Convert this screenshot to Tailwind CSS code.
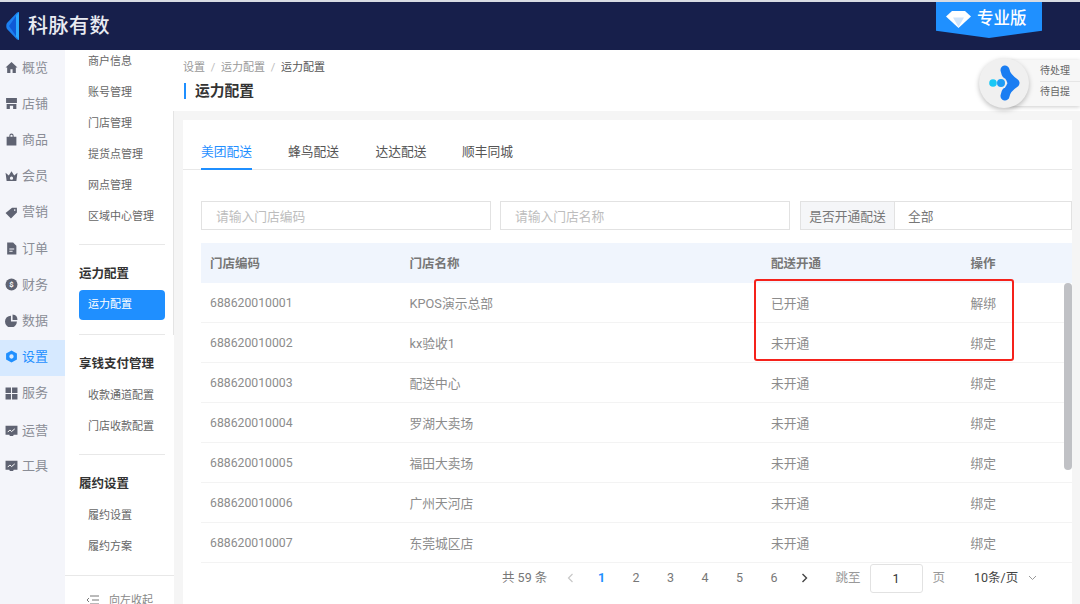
<!DOCTYPE html>
<html lang="zh-CN">
<head>
<meta charset="UTF-8">
<title>运力配置</title>
<script src="https://cdn.jsdelivr.net/npm/@tailwindcss/browser@4"></script>
</head>
<body class="w-[1080px] h-[604px] overflow-hidden bg-white font-['Roboto','Noto_Sans_CJK_SC',sans-serif] text-[12.750px] text-[#8c8c8c]">
<div class="relative flex flex-col h-[604px] overflow-hidden">
  <!-- header -->
  <header class="h-[50px] shrink-0 border-t-2 border-[#d8dbe3] bg-[#171f4b] flex items-start justify-between pl-[6px] pr-[38px] z-10">
    <div class="flex items-center gap-[9px] h-[48px]">
      <svg width="13" height="28" viewBox="0 0 13 28"><path d="M13 0V28L11 27.500 1 17C0 15.500 0 12.500 1 11L11 .5Z" fill="#1c7ff0"/><path d="M10 4V24L3 14Z" fill="#0f5ad6"/><path d="M13 0V28L10 24.500V3.500Z" fill="#2aa8ff"/></svg>
      <span class="text-[20px] leading-none font-medium tracking-[0.5px] text-[#e9ebf2]">科脉有数</span>
    </div>
    <div class="w-[106px] h-[36px] bg-[#1f90ff] [clip-path:polygon(0_0,100%_0,100%_80%,50%_100%,0_80%)] flex items-start gap-[6px] pl-[10px] pt-[5px] text-white">
      <svg class="mt-[3px]" width="25" height="18" viewBox="0 0 25 18"><path d="M6 1H19L25 6.500 12.500 18 0 6.500Z" fill="#fff"/><path d="M7 7.500H18L12.500 17Z" fill="#cfe4fb"/></svg>
      <span class="text-[16.500px] leading-[24px] font-medium">专业版</span>
    </div>
  </header>

  <div class="flex flex-1 min-h-0">
    <!-- icon rail -->
    <nav class="w-[65px] shrink-0 bg-[#f4f5fa] text-[13px] text-[#8a8d96]">
      <a class="flex items-center gap-[4px] h-[36.200px] pb-[1.500px] pl-[5px]"><svg width="13" height="13" viewBox="0 0 24 24" fill="#5f6372"><path d="M12 2 1 12h3v10h6v-7h4v7h6V12h3Z"/></svg>概览</a>
      <a class="flex items-center gap-[4px] h-[36.200px] pb-[1.500px] pl-[5px]"><svg width="13" height="13" viewBox="0 0 24 24" fill="#5f6372"><path d="M2 2h20v9H2ZM3 13h18v9h-6v-6H9v6H3Z"/></svg>店铺</a>
      <a class="flex items-center gap-[4px] h-[36.200px] pb-[1.500px] pl-[5px]"><svg width="13" height="13" viewBox="0 0 24 24" fill="#5f6372"><path d="M8 7V5a4 4 0 0 1 8 0v2h5v16H3V7Zm2 0h4V5a2 2 0 0 0-4 0Z"/></svg>商品</a>
      <a class="flex items-center gap-[4px] h-[36.200px] pb-[1.500px] pl-[5px]"><svg width="13" height="13" viewBox="0 0 24 24" fill="#5f6372"><path fill-rule="evenodd" d="M1 7l6 5 5-8 5 8 6-5-2 15H3Zm11 7a3 3 0 1 0 0 6 3 3 0 0 0 0-6Z"/></svg>会员</a>
      <a class="flex items-center gap-[4px] h-[36.200px] pb-[1.500px] pl-[5px]"><svg width="13" height="13" viewBox="0 0 24 24" fill="#5f6372"><path fill-rule="evenodd" d="M13 3h9v9L11 23 1 13Zm5 3a1.500 1.500 0 1 0 0 3 1.500 1.500 0 0 0 0-3Z"/></svg>营销</a>
      <a class="flex items-center gap-[4px] h-[36.200px] pb-[1.500px] pl-[5px]"><svg width="13" height="13" viewBox="0 0 24 24" fill="#5f6372"><path fill-rule="evenodd" d="M4 1h11l6 6v16H4Zm4 11v2h9v-2Zm0 4v2h6v-2Z"/></svg>订单</a>
      <a class="flex items-center gap-[4px] h-[36.200px] pb-[1.500px] pl-[5px]"><svg width="13" height="13" viewBox="0 0 24 24"><circle cx="12" cy="12" r="11" fill="#5f6372"/><text x="12" y="17" text-anchor="middle" font-size="14" font-weight="700" fill="#fff">$</text></svg>财务</a>
      <a class="flex items-center gap-[4px] h-[36.200px] pb-[1.500px] pl-[5px]"><svg width="13" height="13" viewBox="0 0 24 24" fill="#5f6372"><path d="M11 3v11h11A11 11 0 1 1 11 3Z"/><path d="M14 1a10 10 0 0 1 9 10h-9Z"/></svg>数据</a>
      <a class="flex items-center gap-[4px] h-[36.200px] pb-[1.500px] pl-[5px] bg-[#d6e9ff] text-[#1f8fff]"><svg width="13" height="13" viewBox="0 0 24 24" fill="#1f8fff"><path fill-rule="evenodd" d="M12 1l10 5.500v11L12 23 2 17.500v-11Zm0 7a4 4 0 1 0 0 8 4 4 0 0 0 0-8Z"/></svg>设置</a>
      <a class="flex items-center gap-[4px] h-[36.200px] pb-[1.500px] pl-[5px]"><svg width="13" height="13" viewBox="0 0 24 24" fill="#5f6372"><path d="M1 1h10v10H1ZM13 1h10v10H13ZM1 13h10v10H1ZM13 13h10v10H13Z"/></svg>服务</a>
      <a class="flex items-center gap-[4px] h-[36.200px] pt-[1px] pl-[5px]"><svg width="13" height="13" viewBox="0 0 24 24"><path d="M1 3h22v17h-7l-1 2H9l-1-2H1Z" fill="#5f6372"/><path d="M5 15l4-4 3 3 6-5" stroke="#fff" stroke-width="1.800" fill="none"/></svg>运营</a>
      <a class="flex items-center gap-[4px] h-[36.200px] pb-[1.500px] pl-[5px]"><svg width="13" height="13" viewBox="0 0 24 24"><path d="M1 3h22v17h-7l-1 2H9l-1-2H1Z" fill="#5f6372"/><path d="M5 15l4-4 3 3 6-5" stroke="#fff" stroke-width="1.800" fill="none"/></svg>工具</a>
    </nav>

    <!-- sub menu -->
    <aside class="relative w-[109px] shrink-0 flex flex-col text-[11px] text-[#666]">
      <div class="flex-1 min-h-0 overflow-hidden pl-[14px] pr-[9px]">
        <div class="-mt-[4.500px]">
          <a class="block pl-[9px] leading-[31px]">商户信息</a>
          <a class="block pl-[9px] leading-[31px]">账号管理</a>
          <a class="block pl-[9px] leading-[31px]">门店管理</a>
          <a class="block pl-[9px] leading-[31px]">提货点管理</a>
          <a class="block pl-[9px] leading-[31px]">网点管理</a>
          <a class="block pl-[9px] leading-[31px]">区域中心管理</a>
          <div class="mt-[12px] border-t border-[#e8e8e8]"></div>
          <h3 class="mt-[19px] mb-[6.500px] text-[12.500px] leading-[20px] font-bold text-[#333]">运力配置</h3>
          <a class="block pl-[9px] h-[30px] leading-[30px] rounded-[4px] bg-[#1f8fff] text-white">运力配置</a>
          <div class="mt-[14px] border-t border-[#e8e8e8]"></div>
          <h3 class="mt-[19px] mb-[6px] text-[12.500px] leading-[20px] font-bold text-[#333]">享钱支付管理</h3>
          <a class="block pl-[9px] leading-[31px]">收款通道配置</a>
          <a class="block pl-[9px] leading-[31px]">门店收款配置</a>
          <div class="mt-[12px] border-t border-[#e8e8e8]"></div>
          <h3 class="mt-[19px] mb-[6px] text-[12.500px] leading-[20px] font-bold text-[#333]">履约设置</h3>
          <a class="block pl-[9px] leading-[31px]">履约设置</a>
          <a class="block pl-[9px] leading-[31px]">履约方案</a>
        </div>
      </div>
      <div class="h-[29px] shrink-0 border-t border-[#e8e8e8] flex items-start gap-[10px] pl-[21px] pt-[17px] text-[#888]">
        <svg class="mt-[2px]" width="13" height="10" viewBox="0 0 13 10" fill="none" stroke="#777"><path d="M4 1h9M6 5h7M4 9h9M3 3 1 5l2 2"/></svg>
        <span class="leading-[16px]">向左收起</span>
      </div>
      <div class="absolute right-0 top-[61px] w-px h-[224px] bg-[#e4e4e4]"></div>
    </aside>

    <!-- main -->
    <main class="relative flex-1 min-w-0 flex flex-col bg-[#f5f5f5]">
      <div class="h-[61px] shrink-0 bg-white px-[9px] pt-[11px]">
        <div class="flex items-center h-[14px] text-[11px] text-[#999] gap-[5.750px]">
          <span>设置</span><span class="text-[#bbb]">/</span><span>运力配置</span><span class="text-[#bbb]">/</span><span class="text-[#555]">运力配置</span>
        </div>
        <div class="mt-[8px] ml-[1px] pl-[9px] h-[16px] border-l-2 border-[#1f8fff] flex items-center text-[14.750px] font-bold text-[#333]">运力配置</div>
      </div>
      <div class="flex-1 min-h-0 mt-[9px] ml-[9px] mr-[8px] pb-[11px] bg-white flex flex-col">
        <div class="flex h-[50px] shrink-0 pl-[18px] gap-[35.500px] border-b border-[#e8e8e8] text-[12.750px] text-[#555]">
          <a class="h-[50px] mr-[0.500px] pt-[21.500px] leading-[20px] border-b-2 border-[#1f8fff] text-[#1f8fff]">美团配送</a>
          <a class="pt-[21.500px] mr-[1px] leading-[20px]">蜂鸟配送</a>
          <a class="pt-[21.500px] leading-[20px]">达达配送</a>
          <a class="pt-[21.500px] leading-[20px]">顺丰同城</a>
        </div>
        <div class="flex pl-[18px] mt-[31px] h-[29px] shrink-0">
          <div class="w-[290px] border border-[#e2e2e2] pl-[14px] leading-[29px] text-[#bdbdbd]">请输入门店编码</div>
          <div class="w-[290px] ml-[9px] border border-[#e2e2e2] pl-[14px] leading-[29px] text-[#bdbdbd]">请输入门店名称</div>
          <div class="flex-1 ml-[10px] flex border border-[#e2e2e2]">
            <span class="w-[94px] bg-[#f5f6f8] border-r border-[#e2e2e2] text-center leading-[29px] text-[#777]">是否开通配送</span>
            <span class="pl-[13px] leading-[29px] text-[#777]">全部</span>
          </div>
        </div>
        <div class="relative ml-[18px] mt-[13px] flex-1 min-h-0 overflow-hidden">
          <div class="grid grid-cols-[199.500px_361.500px_199.500px_110.500px] h-[40px] bg-[#f0f5fd] items-center pl-[9px] pt-[3px] text-[12.500px] font-bold text-[#777]">
            <span>门店编码</span><span>门店名称</span><span>配送开通</span><span>操作</span>
          </div>
          <div id="rows"></div>
          <div class="absolute right-0 top-[40px] w-[8px] h-[187px] rounded-[4px] bg-[#c0c1c5]"></div>
        </div>
        <div class="h-[30px] shrink-0 flex items-center text-[12.500px] text-[#777]">
          <span class="ml-[319px] w-[40px] whitespace-nowrap">共 59 条</span>
          <svg class="ml-[25px]" width="7" height="10" viewBox="0 0 7 10" fill="none" stroke="#c8c8c8" stroke-width="1.200"><path d="M5.500 1 1.500 5l4 4"/></svg>
          <span class="ml-[24px] w-[8px] font-bold text-[#1f8fff]">1</span>
          <span class="ml-[26.500px] w-[8px]">2</span>
          <span class="ml-[26.500px] w-[8px]">3</span>
          <span class="ml-[26.500px] w-[8px]">4</span>
          <span class="ml-[26.500px] w-[8px]">5</span>
          <span class="ml-[26.500px] w-[8px]">6</span>
          <svg class="ml-[22px]" width="7" height="10" viewBox="0 0 7 10" fill="none" stroke="#444" stroke-width="1.400"><path d="M1.500 1l4 4-4 4"/></svg>
          <span class="ml-[28px] text-[#999]">跳至</span>
          <span class="ml-[9px] w-[53px] h-[29px] rounded-[3px] border border-[#e2e2e2] text-center leading-[27px] text-[#333]">1</span>
          <span class="ml-[10px] text-[#999]">页</span>
          <span class="ml-[29px] text-[#444]">10条/页</span>
          <svg class="ml-[10px]" width="9" height="6" viewBox="0 0 9 6" fill="none" stroke="#999"><path d="M1 1l3.500 3.500L8 1"/></svg>
        </div>
      </div>

      <!-- floating shortcut -->
      <div class="absolute right-0 top-[10px] w-[76px] h-[46px] rounded-l-[8px] bg-[#f7f7f7] shadow-[0_1px_4px_rgba(0,0,0,0.2)] pl-[36px] flex flex-col text-[10px] text-[#666]">
        <span class="h-[22px] leading-[22px] border-b border-[#e6e6e6]">待处理</span>
        <span class="h-[22px] leading-[20px]">待自提</span>
      </div>
      <div class="absolute left-[805px] top-[8px] w-[50px] h-[50px] rounded-full bg-[#f0f0f0] shadow-[0_2px_5px_rgba(0,0,0,0.25)]">
        <svg width="50" height="50" viewBox="0 0 50 50"><path d="M26 12Q27 19 36 25Q27 31 26 38" fill="none" stroke="#1a7df2" stroke-width="9" stroke-linecap="round" stroke-linejoin="round"/><circle cx="22" cy="25" r="6" fill="#f0f0f0"/><circle cx="14" cy="25" r="3.800" fill="#19c8f5"/><circle cx="22" cy="25" r="4" fill="#1e9cf5"/></svg>
      </div>

      <!-- red annotation -->
      <div class="absolute left-[580px] top-[229px] w-[260px] h-[82px] rounded-[3px] border-2 border-[#f5221b]"></div>
    </main>
  </div>
</div>
<script>
  const stores = [
    ["688620010001", "KPOS演示总部", "已开通", "解绑"],
    ["688620010002", "kx验收1", "未开通", "绑定"],
    ["688620010003", "配送中心", "未开通", "绑定"],
    ["688620010004", "罗湖大卖场", "未开通", "绑定"],
    ["688620010005", "福田大卖场", "未开通", "绑定"],
    ["688620010006", "广州天河店", "未开通", "绑定"],
    ["688620010007", "东莞城区店", "未开通", "绑定"]
  ];
  document.getElementById("rows").innerHTML = stores.map(s =>
    `<div class="grid grid-cols-[199.500px_361.500px_199.500px_110.500px] h-[40px] items-center pl-[9px] pt-[2px] border-b border-[#f3f3f3]">
      <span class="text-[12.250px]">${s[0]}</span><span>${s[1]}</span><span>${s[2]}</span><span>${s[3]}</span>
    </div>`
  ).join("");
</script>
</body>
</html>
